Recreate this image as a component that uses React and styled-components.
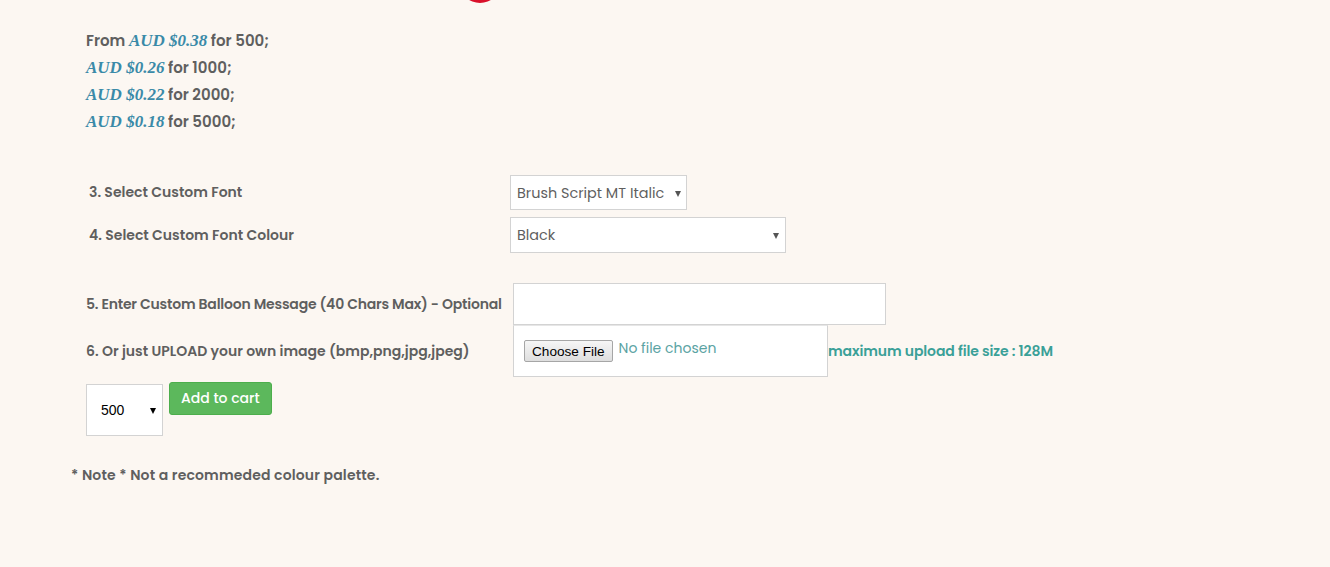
import React from "react";
import styled, { createGlobalStyle } from "styled-components";

const GlobalStyle = createGlobalStyle`
    body {
        margin: 0;
        background: #fcf7f2;
        font-family: "Poppins", "Open Sans", "Liberation Sans", sans-serif;
        color: #5f5f5f;
    }
`;

// ****page*****
const ScPage = styled.div`
    position: relative;
    min-height: 567px;
    padding: 0 0 0 71px;
    box-sizing: border-box;
`;

// balloon peeking in from above
const ScBalloon = styled.svg`
    position: absolute;
    left: 459px;
    top: 0;
`;

/////prices/////
const ScPrices = styled.div`
    padding: 27px 0 0 15px;
    font-size: 15px;
    font-weight: 600;
    line-height: 27px;
`;

const ScPrice = styled.span`
    font-family: "Liberation Serif", "Times New Roman", serif;
    font-style: italic;
    font-weight: 700;
    font-size: 17px;
    color: #3a8aa8;
`;

//////form rows///////
const ScGrid = styled.div`
    display: grid;
    grid-template-columns: ${props => props.labelWidth}px auto;
    row-gap: ${props => props.gap}px;
    align-items: center;
    margin: ${props => props.top}px 0 0 ${props => props.left}px;
`;

const ScLabel = styled.div`
    font-size: 14px;
    font-weight: 600;
    white-space: nowrap;
    letter-spacing: ${props => props.tight ? "-0.2px" : "0"};
`;

const ScSelectWrap = styled.div`
    position: relative;
    width: ${props => props.width}px;
    height: ${props => props.height}px;
    &:after {
        content: "";
        position: absolute;
        right: ${props => props.arrowRight}px;
        top: 50%;
        margin-top: -2px;
        border-left: 3.5px solid transparent;
        border-right: 3.5px solid transparent;
        border-top: 6px solid ${props => props.arrowColor || "#555"};
        pointer-events: none;
    }
`;

const ScSelect = styled.select`
    appearance: none;
    -webkit-appearance: none;
    width: 100%;
    height: 100%;
    box-sizing: border-box;
    border: 1px solid #d3d3d3;
    border-radius: 0;
    background: #fff;
    padding: 0 0 0 ${props => props.padLeft || 6}px;
    font-family: ${props => props.plain ? '"Liberation Sans", Arial, sans-serif' : 'inherit'};
    font-size: ${props => props.plain ? "14px" : "14.4px"};
    color: ${props => props.plain ? "#000" : "#5f5f5f"};
    outline: none;
`;

const ScTextInput = styled.input`
    width: 373px;
    height: 42px;
    box-sizing: border-box;
    border: 1px solid #d3d3d3;
    background: #fff;
    outline: none;
    display: block;
`;

const ScUploadRow = styled.div`
    display: flex;
    align-items: center;
`;

const ScFileBox = styled.div`
    width: 315px;
    height: 52px;
    box-sizing: border-box;
    border: 1px solid #d3d3d3;
    border-top-color: #e6e6e6;
    background: #fff;
    display: flex;
    align-items: flex-start;
    padding: 14px 0 0 10px;
    gap: 6px;
`;

const ScChooseButton = styled.button`
    font-family: "Liberation Sans", Arial, sans-serif;
    font-size: 13.6px;
    color: #000;
    height: 22px;
    padding: 0 7px;
    margin: 0;
    border: 1px solid #a6a6a6;
    border-radius: 2px;
    background: linear-gradient(#f6f6f6, #dedede);
`;

const ScNoFile = styled.span`
    font-size: 14px;
    color: #5aa3a3;
    line-height: 16px;
`;

const ScHint = styled.span`
    font-size: 14px;
    font-weight: 600;
    color: #3aa098;
    margin-left: 0;
    letter-spacing: -0.1px;
`;

//////cart///////
const ScCart = styled.div`
    display: flex;
    align-items: flex-start;
    gap: 6px;
    margin: 7px 0 0 15px;
`;

const ScAddButton = styled.button`
    font-family: inherit;
    font-size: 14px;
    font-weight: 500;
    color: #fff;
    background: #5cb85c;
    border: 1px solid #4cae4c;
    border-radius: 3px;
    height: 33px;
    padding: 0 11px;
    margin-top: -2px;
`;

const ScNote = styled.p`
    margin: 29px 0 0;
    font-size: 14px;
    font-weight: 600;
    letter-spacing: 0.15px;
`;

const prices = [
    { prefix: "From ", amount: "AUD $0.38", qty: 500 },
    { prefix: "", amount: "AUD $0.26", qty: 1000 },
    { prefix: "", amount: "AUD $0.22", qty: 2000 },
    { prefix: "", amount: "AUD $0.18", qty: 5000 },
];

export default function App() {
    return (
        <>
            <GlobalStyle />
            <ScPage>
                <ScBalloon width="42" height="4" viewBox="0 0 42 4">
                    <ellipse cx="21" cy="-16" rx="20" ry="19" fill="#d9102a" />
                </ScBalloon>

                <ScPrices>
                    {prices.map(p => (
                        <div key={p.qty}>
                            {p.prefix}
                            <ScPrice>{p.amount}</ScPrice> for {p.qty};
                        </div>
                    ))}
                </ScPrices>

                <ScGrid labelWidth={421} gap={7} top={40} left={18}>
                    <ScLabel>3. Select Custom Font</ScLabel>
                    <ScSelectWrap width={177} height={35} arrowRight={6}>
                        <ScSelect defaultValue="brush">
                            <option value="brush">Brush Script MT Italic</option>
                        </ScSelect>
                    </ScSelectWrap>
                    <ScLabel>4. Select Custom Font Colour</ScLabel>
                    <ScSelectWrap width={276} height={36} arrowRight={7}>
                        <ScSelect defaultValue="black">
                            <option value="black">Black</option>
                        </ScSelect>
                    </ScSelectWrap>
                </ScGrid>

                <ScGrid labelWidth={427} gap={0} top={30} left={15}>
                    <ScLabel tight>5. Enter Custom Balloon Message (40 Chars Max) - Optional</ScLabel>
                    <ScTextInput type="text" />
                    <ScLabel>6. Or just UPLOAD your own image (bmp,png,jpg,jpeg)</ScLabel>
                    <ScUploadRow>
                        <ScFileBox>
                            <ScChooseButton type="button">Choose File</ScChooseButton>
                            <ScNoFile>No file chosen</ScNoFile>
                        </ScFileBox>
                        <ScHint>maximum upload file size : 128M</ScHint>
                    </ScUploadRow>
                </ScGrid>

                <ScCart>
                    <ScSelectWrap width={77} height={52} arrowRight={7} arrowColor="#000">
                        <ScSelect plain padLeft={14} defaultValue="500">
                            <option value="500">500</option>
                        </ScSelect>
                    </ScSelectWrap>
                    <ScAddButton type="button">Add to cart</ScAddButton>
                </ScCart>

                <ScNote>* Note * Not a recommeded colour palette.</ScNote>
            </ScPage>
        </>
    );
}
